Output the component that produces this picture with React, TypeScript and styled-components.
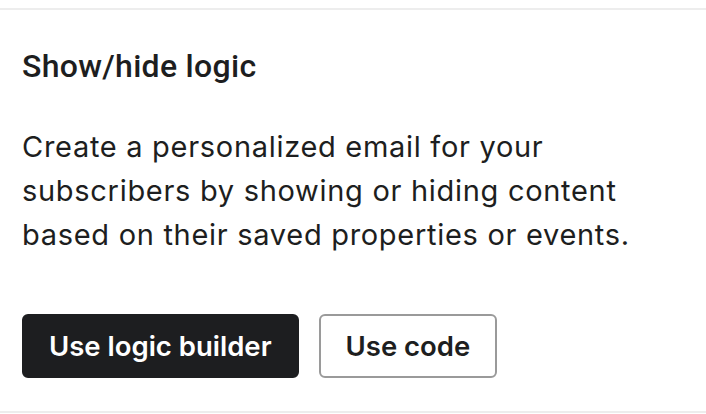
import React from 'react'
import styled, { createGlobalStyle } from 'styled-components'

const GlobalStyle = createGlobalStyle`
  html, body {
    margin: 0;
    padding: 0;
    background: #ffffff;
  }
`

const Page = styled.div`
  width: 706px;
  height: 414px;
  box-sizing: border-box;
  padding-top: 8px;
  background: #ffffff;
`

const Section = styled.section`
  border-top: 2px solid #ededed;
  border-bottom: 2px solid #ededed;
  padding: 38px 22px 33px;
  box-sizing: border-box;
`

const Title = styled.h2`
  margin: 0;
  font-family: Roboto, "Liberation Sans", sans-serif;
  font-weight: 500;
  font-size: 32px;
  line-height: 36px;
  letter-spacing: 0.3px;
  color: #1d1e20;
`

const Description = styled.p`
  margin: 41px 0 0;
  max-width: 640px;
  font-family: Inter, "Noto Sans", sans-serif;
  font-weight: 400;
  font-size: 29px;
  line-height: 44px;
  letter-spacing: 0.7px;
  color: #1d1e20;
`

const Actions = styled.div`
  display: flex;
  gap: 20px;
  margin-top: 57px;
`

const Button = styled.button<{ $variant: 'primary' | 'secondary' }>`
  height: 64px;
  padding: 0 25px;
  border-radius: 6px;
  font-family: Inter, "Noto Sans", sans-serif;
  font-weight: 600;
  font-size: 27.5px;
  cursor: pointer;
  box-sizing: border-box;
  background: ${p => (p.$variant === 'primary' ? '#1d1e20' : '#ffffff')};
  color: ${p => (p.$variant === 'primary' ? '#ffffff' : '#1d1e20')};
  border: ${p => (p.$variant === 'primary' ? '2px solid #1d1e20' : '2px solid #9a9a9a')};
`

export default function App() {
  return (
    <Page>
      <GlobalStyle />
      <Section>
        <Title>Show/hide logic</Title>
        <Description>
          Create a personalized email for your subscribers by showing or hiding content based on their saved
          properties or events.
        </Description>
        <Actions>
          <Button $variant="primary">Use logic builder</Button>
          <Button $variant="secondary">Use code</Button>
        </Actions>
      </Section>
    </Page>
  )
}
